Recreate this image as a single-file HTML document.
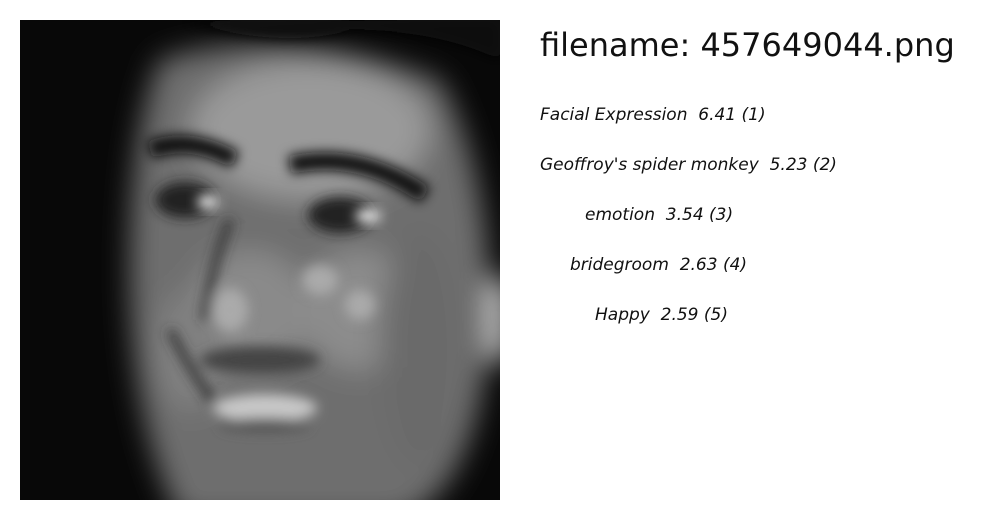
<!DOCTYPE html>
<html><head><style>
html,body{margin:0;padding:0;background:#fff;width:1000px;height:520px;overflow:hidden}
.t{position:absolute;font-family:"DejaVu Sans","Liberation Sans",sans-serif;color:#111;white-space:nowrap}
.l{position:absolute;font-family:"DejaVu Sans","Liberation Sans",sans-serif;font-style:italic;font-size:17px;color:#111;white-space:nowrap;line-height:20px}
</style></head><body>
<svg style="position:absolute;left:20px;top:20px" width="480" height="480" viewBox="0 0 480 480">
<defs>
<filter id="b" x="-30%" y="-30%" width="160%" height="160%"><feGaussianBlur stdDeviation="14"/></filter>
<filter id="s" x="-50%" y="-50%" width="200%" height="200%"><feGaussianBlur stdDeviation="6"/></filter>
<clipPath id="c"><rect width="480" height="480"/></clipPath>
</defs>
<rect width="480" height="480" fill="#080808"/>
<g clip-path="url(#c)">
<g filter="url(#b)">
<path d="M140 40 Q260 0 420 60 Q470 150 470 300 Q460 470 380 500 L160 500 Q110 400 110 250 Q110 110 140 40Z" fill="#6e6e6e"/>
<ellipse cx="290" cy="110" rx="120" ry="70" fill="#9a9a9a"/>
<ellipse cx="230" cy="290" rx="60" ry="60" fill="#8a8a8a"/>
<ellipse cx="340" cy="290" rx="60" ry="60" fill="#8c8c8c"/>
<ellipse cx="170" cy="330" rx="35" ry="60" fill="#808080"/>
<ellipse cx="400" cy="330" rx="40" ry="120" fill="#6a6a6a"/>
<rect x="470" y="260" width="20" height="80" fill="#ccc"/>
</g>
<g filter="url(#s)">
<path d="M130 130 Q170 115 215 140" stroke="#111" stroke-width="18" fill="none"/>
<path d="M270 145 Q340 130 405 175" stroke="#111" stroke-width="18" fill="none"/>
<ellipse cx="165" cy="180" rx="30" ry="18" fill="#222"/>
<ellipse cx="320" cy="195" rx="32" ry="18" fill="#222"/>
<path d="M210 200 Q190 250 185 300" stroke="#333" stroke-width="8" fill="none"/>
<path d="M150 310 Q180 370 210 400" stroke="#333" stroke-width="8" fill="none"/>
<ellipse cx="240" cy="340" rx="60" ry="14" fill="#444"/>
<ellipse cx="245" cy="388" rx="52" ry="14" fill="#c8c8c8"/>
<ellipse cx="245" cy="405" rx="45" ry="7" fill="#555"/>
<ellipse cx="210" cy="290" rx="18" ry="22" fill="#aaa"/>
<ellipse cx="300" cy="260" rx="18" ry="15" fill="#aaa"/>
<ellipse cx="340" cy="285" rx="15" ry="15" fill="#aaa"/>
<path d="M160 0 Q260 30 330 10 Q420 10 480 40 L480 0Z" fill="#111"/>
</g>
<ellipse cx="188" cy="182" rx="11" ry="7" fill="#eee" filter="url(#s)"/>
<ellipse cx="348" cy="196" rx="13" ry="7" fill="#eee" filter="url(#s)"/>
</g>
</svg>
<div class="t" style="left:540px;top:26px;font-size:32px;">filename: 457649044.png</div>
<div class="l" style="left:540px;top:105px">Facial Expression&nbsp; 6.41 (1)</div>
<div class="l" style="left:540px;top:155px">Geoffroy's spider monkey&nbsp; 5.23 (2)</div>
<div class="l" style="left:585px;top:205px">emotion&nbsp; 3.54 (3)</div>
<div class="l" style="left:570px;top:255px">bridegroom&nbsp; 2.63 (4)</div>
<div class="l" style="left:595px;top:305px">Happy&nbsp; 2.59 (5)</div>
</body></html>
